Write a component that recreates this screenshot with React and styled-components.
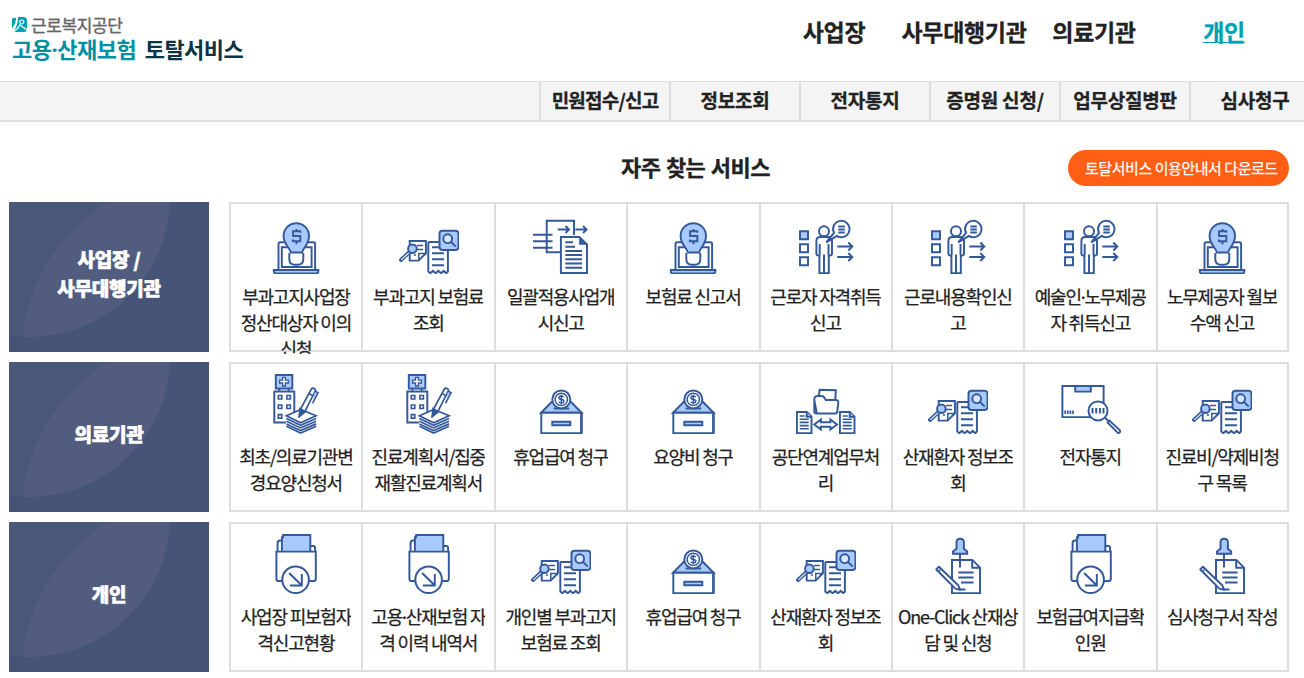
// ===== Logic =====
import { Fragment } from "react";
import styled, { createGlobalStyle } from "styled-components";

const mainMenu = ["사업장", "사무대행기관", "의료기관", "개인"];

const subMenu = ["민원접수/신고", "정보조회", "전자통지", "증명원 신청/", "업무상질병판", "심사청구"];

const groups = [
  {
    title: "사업장 /\n사무대행기관",
    items: [
      { icon: "laptop", label: "부과고지사업장\n정산대상자 이의\n신청" },
      { icon: "receipt", label: "부과고지 보험료\n조회" },
      { icon: "transfer", label: "일괄적용사업개\n시신고" },
      { icon: "laptop", label: "보험료 신고서" },
      { icon: "person", label: "근로자 자격취득\n신고" },
      { icon: "person", label: "근로내용확인신\n고" },
      { icon: "person", label: "예술인·노무제공\n자 취득신고" },
      { icon: "laptop", label: "노무제공자 월보\n수액 신고" },
    ],
  },
  {
    title: "의료기관",
    items: [
      { icon: "hospital", label: "최초/의료기관변\n경요양신청서" },
      { icon: "hospital", label: "진료계획서/집중\n재활진료계획서" },
      { icon: "coinBox", label: "휴업급여 청구" },
      { icon: "coinBox", label: "요양비 청구" },
      { icon: "folder", label: "공단연계업무처\n리" },
      { icon: "receipt", label: "산재환자 정보조\n회" },
      { icon: "parcel", label: "전자통지" },
      { icon: "receipt", label: "진료비/약제비청\n구 목록" },
    ],
  },
  {
    title: "개인",
    items: [
      { icon: "card", label: "사업장 피보험자\n격신고현황" },
      { icon: "card", label: "고용·산재보험 자\n격 이력 내역서" },
      { icon: "receipt", label: "개인별 부과고지\n보험료 조회" },
      { icon: "coinBox", label: "휴업급여 청구" },
      { icon: "receipt", label: "산재환자 정보조\n회" },
      { icon: "pin", label: "One-Click 산재상\n담 및 신청" },
      { icon: "card", label: "보험급여지급확\n인원" },
      { icon: "pin", label: "심사청구서 작성" },
    ],
  },
];

const BLUE = "#a8caff";
const LINE = "#34599a";

const icons = {
  laptop: (
    <>
      <path d="M12.5 55.5V30q0-1.8 1.8-1.8h33q1.8 0 1.8 1.8v25.5" fill="#fff" />
      <path d="M15.8 53V33.2h29.8V53z" />
      <path d="M7.8 56h44.6v1.2q0 2.2-2.2 2.2H10q-2.2 0-2.2-2.2z" fill={BLUE} />
      <path d="M23.3 39v6q0 5.7 5.5 5.7h3q5.5 0 5.5-5.7v-6" fill="#fff" />
      <path d="M24.8 38.4c-.5-4-7.2-8-7.2-16.5a12.7 12.7 0 0 1 25.4 0c0 8.5-6.3 12.5-6.8 16.5z" fill={BLUE} />
      <path d="M34.3 18.800v-1.500h-7.200v4.600h7.200v5.400h-7.400v-1.700M30.500 15v2.300M30.500 27.500v2.800" />
    </>
  ),
  receipt: (
    <>
      <path d="M10.700 26.900h16.200V39.300l-7.300 7.300h-8.900z" fill="#fff" />
      <path d="M26.500 39.500h-6.700v6.700M18 31.500h6M18 35.500h6M15 41h2" strokeWidth="1.500" />
      <path d="M10.500 38 2 46" strokeWidth="3.800" strokeLinecap="round" />
      <path d="M10 38.600 2.300 45.900" stroke="#d8e7ff" strokeWidth="1.300" />
      <circle cx="13.400" cy="34.700" r="4.300" fill={BLUE} />
      <path d="M29.300 57.500V29q0-1 1-1h18.600v29.500l-1.600 1.700-2.600-2.300-2.700 2.300-2.700-2.300-2.700 2.300-2.700-2.300-2.600 2.300z" fill="#fff" />
      <path d="M33 33.300h7M33 39.300h12M33 45.300h12M33 51.300h12" />
      <rect x="40.500" y="16.700" width="19" height="19.300" rx="3" fill={BLUE} />
      <circle cx="48.700" cy="24.700" r="4.400" fill="#d8e7ff" />
      <path d="m52 28 4.800 4.600" />
    </>
  ),
  transfer: (
    <>
      <path d="M43 21V6.700H15.700v31.600H29" />
      <path d="M2 20.700h19.500M2 27.300h19.500M2 33.700h19.500" />
      <path d="M26.700 15.500H38M34.500 12l3.500 3.500-3.500 3.500M44.300 15.500h11.300M52 12l3.600 3.500L52 19" />
      <path d="M29.900 59V22.900h18.400L56 30.500V59z" fill="#fff" />
      <path d="M34.300 28.300H42M34.300 32.700H44M34.300 36.900H51M34.300 41H51M34.300 45.200H51M34.300 49.400H51M34.300 53.700H51" />
      <path d="M48.300 23v7.500H56z" fill={LINE} strokeWidth=".5" />
    </>
  ),
  person: (
    <>
      <path d="M4 17.300h8v8H4z" fill={BLUE} />
      <path d="M4 30.300h8v8H4zM4 43.300h8v8H4z" />
      <circle cx="28" cy="17.200" r="5" />
      <path d="M23.400 59.200V41.500h-1.300q-1.700 0-1.700-1.800V27q0-4 3.800-4h8q3.800 0 3.800 4v12.700q0 1.800-1.700 1.800h-1.500v17.700zM23.700 30v11M32.500 30v11M28 40.500v18.700" fill="#fff" />
      <path d="M30.300 28.300 38 18.800a8.200 8.200 0 1 1 2.800 3.100z" fill="#fff" />
      <path d="M42.300 12.400h6.500M42.300 15.400h6.500M42.300 18.400h6.500" />
      <path d="M41.300 32.500h15M52.300 28.500l4 4-4 4M41.300 43h15M52.300 39l4 4-4 4" />
    </>
  ),
  hospital: (
    <g transform="translate(-.4 0)">
      <path d="M13.700 14.500v3M23 14.500v3" />
      <path d="M10.200.9h16.500v13.600H10.200z" fill={BLUE} />
      <path d="M17 3.300h2.800v2.900h3v2.800h-3v3H17V9h-3V6.200h3z" fill="#fff" strokeWidth="1.300" />
      <path d="M8.700 17.500h20v31h-20z" fill="#fff" />
      <path d="M12.700 21.500h3.500V25h-3.500zM21.300 21.500h3.500V25h-3.500zM12.700 31h3.500v3.500h-3.500zM21.300 31h3.500v3.500h-3.500zM12.700 40.600h3.500v3.500h-3.500z" strokeWidth="1.600" />
      <path d="m20.300 41.800 15-6 15.500 6v9L35 59.300l-14.700-8z" fill="#fff" stroke="none" />
      <path d="m20.800 41.800 14.500-6.300 15.200 6.300L35 48.800zM20.800 44.500l14.200 6.700 15.500-6.700M20.800 47.200 35 53.900l15.500-6.700M20.800 49.900 35 56.600l15.500-6.700M20.800 52.300 35 59l15.500-6.700" strokeWidth="1.700" />
      <path d="m33.500 42.500.9-6.500L45.800 15q1-1.600 2.800-.6t1 2.800L38.800 38.500z" fill="#fff" strokeWidth="1.700" />
      <path d="m34.300 34.500 5.200 2.800-5.500 5z" fill={LINE} strokeWidth="1.500" />
      <path d="m43.500 19.500 4 2.300M49.500 17l3 1.800-5.600 10.500" fill={BLUE} strokeWidth="1.500" />
    </g>
  ),
  coinBox: (
    <g transform="translate(.6 0)">
      <path d="M9.500 38.700 20.500 27.500h18.500l11 11.200z" fill={BLUE} />
      <path d="M9.700 38.700h40.200v20.500H9.700z" fill="#fff" />
      <path d="M49.800 38.700v20.500" strokeWidth="2.400" />
      <path d="M20.700 47.700h18v3.600h-18z" fill={BLUE} />
      <path d="M22 34.500h15.500" />
      <circle cx="29.700" cy="25.400" r="9" fill="#fff" />
      <circle cx="29.700" cy="25.400" r="6.200" strokeWidth="1.500" />
      <path d="M32 23.300q-.5-1.200-2.300-1.200-2.300 0-2.300 1.600t2.300 1.700q2.500.2 2.500 1.900t-2.500 1.700q-2 0-2.400-1.400M29.700 20.700v9.500" strokeWidth="1.500" />
    </g>
  ),
  folder: (
    <>
      <path d="m22.700 24 .9-8.300 16.200.6-.6 11.500" fill="#fff" />
      <path d="M20.500 39V37.500L18.300 26q-.2-3.800 2.800-4h4.500q1.800 0 3 2l1.200 2h9.800q3 .2 2.700 2.800L41.200 38q-.3 1.500-2 1.500H20.500q-2.200 0-2.200-2V25" fill="#fff" />
      {[0, 43].map((x) => (
        <g key={x} transform={`translate(${x} 0)`}>
          <path d="M.9 38h10l4.600 4.600v16.700H.9z" fill="#fff" />
          <path d="M10.700 38v4.800h4.800" fill={BLUE} />
          <path d="M3.700 42h5M3.700 45.200h9M3.700 48.400h9M3.700 51.600h9M3.700 54.800h9" strokeWidth="1.600" />
        </g>
      ))}
      <path d="m18.300 50.500 6.500-5v2.700h9.600v-2.700l6.500 5-6.500 5v-2.700h-9.600v2.700z" fill="#fff" />
    </>
  ),
  parcel: (
    <>
      <path d="M1.400 12h41.200v31.100H1.400z" />
      <path d="M14.200 12h15.600v5.600H14.200z" fill={BLUE} />
      <path d="M4.200 36.500V40M6.800 36.500V40M9.400 36.500V40M12 36.500V40" strokeWidth="1.700" />
      <circle cx="37" cy="36.900" r="9.500" fill="#fff" />
      <path d="M31.500 34v5.600M35.200 34v5.600M38.900 34v5.600M42.500 34v5.600" />
      <path d="m44 43.800 4 3.800" />
      <path d="m48.500 46.600 10.200 9.500q1 1.200 0 2.300t-2.300 0l-9.700-9.700z" fill="#fff" />
    </>
  ),
  card: (
    <g transform="translate(-.4 0)">
      <path d="M12 17.300V9q0-2.500 2.500-2.500H17M44.500 12h3q2 0 2 2v3.300" />
      <path d="M16.300 17.400V3.200h1.200V.9h27.200v16.500" fill={BLUE} />
      <path d="M12.800 47q-2 0-2-2V17.600h39.400V45q0 2-2 2" />
      <path d="M12 47h5M43.500 47H49" />
      <circle cx="30" cy="45.700" r="13.300" fill="#fff" />
      <path d="m23.500 39 12.500 12.300M36.200 40v11.500H24.300" />
    </g>
  ),
  pin: (
    <>
      <path d="M24 25.900h20.300l7.700 7.700v25.500H24z" fill="#fff" />
      <path d="M44.200 26v7.700H52" />
      <path d="M30.300 38.500h15.300M30.300 43.500h15.300M33 48.500h12.600M31 55.500h6.500" />
      <path d="M32 20v13.500" />
      <path d="M28.500 14.800V8.500q0-3.700 3.700-3.700t3.700 3.700v6.300l3.300 2.600v2.300H25v-2.300z" fill={BLUE} />
      <path d="m8.300 35.500 2.600-2.800 19.500 18.800 1.600 4.400-4.600-1.300z" fill="#fff" strokeLinejoin="round" />
      <path d="m10.500 37.500 2.500-2.500" strokeWidth="1.300" />
    </>
  ),
};

const ServiceIcon = ({ name }) => (
  <IconSvg viewBox="0 0 60 60" aria-hidden="true">
    {icons[name]}
  </IconSvg>
);

// the CJK middle dot is too wide between words, so it gets a narrow one
const DotText = ({ children }) =>
  children.split("·").map((part, i) => (
    <Fragment key={i}>
      {i > 0 && <Dot>·</Dot>}
      {part}
    </Fragment>
  ));

const App = () => (
  <Page>
    <GlobalStyle />
    <Header>
      <Logo>
        <LogoOrg>
          <svg width="15" height="16" viewBox="0 0 15 16">
            <path d="M0 1.500 4 .5q.5 5-4 11z" fill="#00a0b4" />
            <path d="M6 0h5.500Q15 0 15 3.500v8Q15 15 11.500 15H1Q6 9 6 0z" fill="#00a0b4" />
            <path d="M1 15.500Q6 12 8.300 7.200M8.300 8.500l6.700 4.200" stroke="#fff" strokeWidth="1.200" fill="none" />
            <circle cx="9.800" cy="5" r="2" stroke="#fff" strokeWidth="1.200" fill="none" />
          </svg>
          근로복지공단
        </LogoOrg>
        <LogoName>
          <Teal>
            <DotText>고용·산재보험</DotText>
          </Teal>{" "}
          토탈서비스
        </LogoName>
      </Logo>
      <MainNav>
        {mainMenu.map((item) => (
          <MainLink key={item} $active={item === "개인"}>
            {item}
          </MainLink>
        ))}
      </MainNav>
    </Header>

    <SubNav>
      {subMenu.map((item) => (
        <SubLink key={item} $tight={item.length > 6 && !item.includes(" ")}>
          {item}
        </SubLink>
      ))}
    </SubNav>

    <Content>
      <TitleBar>
        <Title>자주 찾는 서비스</Title>
        <Download>토탈서비스 이용안내서 다운로드</Download>
      </TitleBar>
      {groups.map((group) => (
        <Group key={group.title}>
          <GroupName>{group.title}</GroupName>
          <Services>
            {group.items.map((item, i) => (
              <Service key={i}>
                <ServiceIcon name={item.icon} />
                <ServiceLabel>
                  <DotText>{item.label}</DotText>
                </ServiceLabel>
              </Service>
            ))}
          </Services>
        </Group>
      ))}
    </Content>
  </Page>
);

export default App;

// ===== Styling =====

const GlobalStyle = createGlobalStyle`
  * {
    box-sizing: border-box;
  }

  body {
    margin: 0;
    background: #fff;
    color: #222;
    font-family: "Noto Sans CJK KR", "Noto Sans", sans-serif;
    overflow: hidden;
  }
`;

const Page = styled.div`
  width: 1304px;
  height: 678px;
  overflow: hidden;
`;

const Dot = styled.span`
  font-family: "Noto Sans", sans-serif;
  line-height: 1;
`;

const Header = styled.header`
  display: flex;
  justify-content: space-between;
  height: 81px;
`;

const Logo = styled.div`
  padding: 15px 0 0 12px;
  white-space: nowrap;
`;

const LogoOrg = styled.div`
  display: flex;
  align-items: center;
  gap: 4px;
  height: 19px;
  line-height: 19px;
  font-size: 17px;
  letter-spacing: -0.4px;
  color: #666;
  -webkit-text-stroke: 0.4px #666;
`;

const LogoName = styled.div`
  height: 28px;
  line-height: 28px;
  font-size: 22px;
  font-weight: 700;
  letter-spacing: -0.5px;
  word-spacing: 4px;
  color: #0b3444;
`;

const Teal = styled.span`
  color: #0090a3;
`;

const MainNav = styled.nav`
  display: flex;
  width: 535px;
`;

const MainLink = styled.a`
  flex: 0 0 130px;
  line-height: 62px;
  text-align: center;
  font-size: 23px;
  font-weight: 700;
  letter-spacing: -0.3px;
  color: ${({ $active }) => ($active ? "#00a0b4" : "#222")};
  text-decoration: ${({ $active }) => ($active ? "underline 1px" : "none")};
  -webkit-text-stroke: 0.3px currentColor;
`;

const SubNav = styled.nav`
  display: flex;
  height: 41px;
  padding-left: 539px;
  border-top: 1px solid #ddd;
  border-bottom: 2px solid #ddd;
  background: #f4f4f4;
`;

const SubLink = styled.a`
  flex: 0 0 130px;
  border-left: 2px solid #ddd;
  line-height: 36px;
  text-align: center;
  font-size: 19px;
  font-weight: 700;
  letter-spacing: ${({ $tight }) => ($tight ? "-0.8px" : "-0.2px")};
  -webkit-text-stroke: 0.3px currentColor;
`;

const Content = styled.main`
  width: 1280px;
  margin-left: 9px;
`;

const TitleBar = styled.div`
  display: grid;
  grid-template-columns: 1fr auto 1fr;
  align-items: center;
  height: 80px;
  padding: 12px 0 0 93px;
`;

const Title = styled.h2`
  grid-column: 2;
  margin: 0 0 5px;
  font-size: 22px;
  font-weight: 700;
  letter-spacing: -0.5px;
  word-spacing: 1px;
  -webkit-text-stroke: 0.3px currentColor;
`;

const Download = styled.a`
  justify-self: end;
  width: 221px;
  height: 36px;
  padding-left: 17px;
  border-radius: 18px;
  background: #ff5e15;
  color: #fff;
  font-size: 15px;
  line-height: 36px;
  letter-spacing: -0.45px;
  white-space: nowrap;
  -webkit-text-stroke: 0.25px currentColor;
`;

const Group = styled.section`
  display: flex;
  gap: 20px;
  height: 150px;
  margin-bottom: 10px;
`;

// two big circles crossing, with the shared part lighter
const GroupName = styled.h3`
  display: flex;
  flex: 0 0 200px;
  align-items: center;
  justify-content: center;
  margin: 0;
  padding-bottom: 8px;
  background:
    radial-gradient(circle at 185px 150px, transparent 171.5px, rgba(70, 65, 115, 0.12) 172px),
    radial-gradient(circle at 21px -5px, transparent 139.5px, #465577 140px),
    radial-gradient(circle at 185px 150px, #525c7f 171.5px, #4a5b79 172px);
  color: #fff;
  font-size: 19px;
  font-weight: 900;
  line-height: 29px;
  letter-spacing: -0.2px;
  text-align: center;
  white-space: pre-line;
  -webkit-text-stroke: 0.6px currentColor;
`;

const Services = styled.ul`
  display: grid;
  grid-template-columns: repeat(7, 132.4px) 1fr;
  width: 1060px;
  margin: 0;
  padding: 0;
  border: 2px solid #ddd;
  list-style: none;
`;

const Service = styled.li`
  display: flex;
  flex-direction: column;
  align-items: center;
  height: 146px;
  padding-top: 10px;
  border-right: 2px solid #ddd;

  &:last-child {
    border-right: 0;
  }
`;

const IconSvg = styled.svg`
  flex: none;
  width: 60px;
  height: 60px;
  fill: none;
  stroke: ${LINE};
  stroke-width: 1.95;
`;

const ServiceLabel = styled.span`
  flex: 0 0 71px;
  margin-top: 9px;
  margin-right: 0.6px;
  overflow: hidden;
  font-size: 18px;
  line-height: 26px;
  letter-spacing: -1.2px;
  text-align: center;
  white-space: pre;
  -webkit-text-stroke: 0.25px currentColor;
`;
